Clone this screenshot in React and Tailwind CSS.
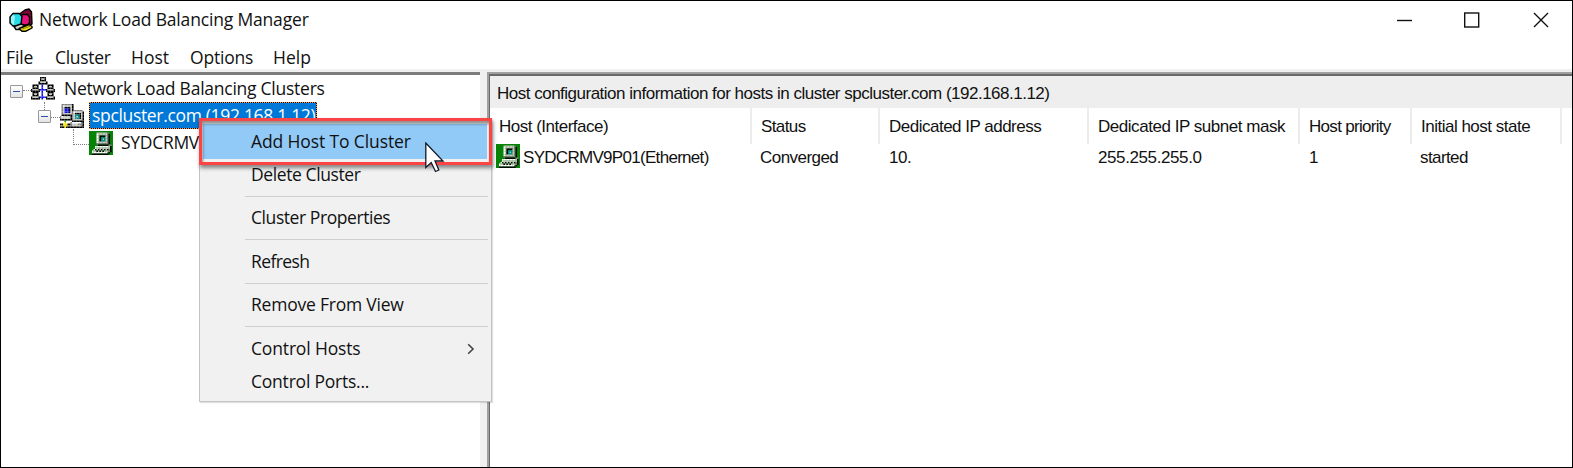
import React from 'react';

const COLORS = {
  K: '#000000', W: '#ffffff', G: '#c6c6c0', D: '#808080', T: '#008a8a',
  C: '#7fe0d8', B: '#1414e6', L: '#6a7cff', Y: '#f0e000', N: '#078407',
};

const HOST = [
  '................',
  '.....GGGGGGGD...',
  '.....WGGGGGGDK..',
  '.....WGKKKKGDK..',
  '.....WGKTTTGDK..',
  '.....WGKTCTGDK..',
  '.....WGKTTTGDK..',
  '.....WGGGGGGDK..',
  '.....DDDDDDDDK..',
  '......KKKKKKKDD.',
  '....WWWWWWWWWGK.',
  '....WGGGGGGGGGK.',
  '...WKGKGKGKGKDK.',
  '..WGGKGKGKGGGDK.',
  '..WWWWWWWWWWDK..',
  '..KKKKKKKKKKK...',
];

const ROOT = [
  '......KKKK......',
  '......KGGK......',
  '......KKKK......',
  '.....KGGGGK.....',
  '.....KKKKKK.....',
  '.KKKK..B...KKKK.',
  '.KGGK..B...KGGK.',
  '.KKKK..B...KKKK.',
  'KGGGGKBBBBKGGGGK',
  'KKKKKK.B..KKKKKK',
  '.KKKK..B...KKKK.',
  '.KGGK..B...KGGK.',
  '.KKKK..B...KKKK.',
  'KGGGGKBBBBKGGGGK',
  'KKKKKK.B..KKKKKK',
  '................',
];

const CLUSTER = [
  '.DDDDDDDK.......',
  '.DWGGGGGK.......',
  '.DGKKKKGK.......',
  '.DGBBBKGK.......',
  '.DGBBBKGKDDDDDD.',
  '.DGBBBKGDWGGGGGK',
  '.DGGGGGGDGKKKKGK',
  '.KKKKKKKDGTTTKGK',
  'DWGGGGGKDGTCTKGK',
  'DGGGGGGKDGTTTKGK',
  'KKKKKKKKDGGGGGGK',
  '...N....KKKKKKKK',
  '...Y...DWWWWWWDK',
  'KKYYYKKDGGGGDDDK',
  'DDYYYDDDGGGGGGDK',
  'KKKYKKKKKKKKKKKK',
];

function PixelIcon({ rows, bg }) {
  return (
    <svg viewBox="0 0 16 16" className="h-6 w-6 shrink-0">
      {bg && <rect width="16" height="16" fill={bg} />}
      {rows.map((row, y) =>
        [...row].map((c, x) =>
          c === '.' ? null : <rect key={x + '-' + y} x={x} y={y} width="1.04" height="1.04" fill={COLORS[c]} />
        )
      )}
    </svg>
  );
}

function AppIcon() {
  return (
    <svg viewBox="0 0 24 24" className="h-6 w-6 shrink-0" stroke="#000" strokeWidth="1.4" strokeLinejoin="round">
      <path d="M10.5 6 16 2 20 1 22.5 4 23 16 20 18 12 15z" fill="#7a0636" />
      <path d="M12 8 13.5 6.5H18.5L20.5 9V15L18 17H14L11.5 15z" fill="#e8107a" />
      <path d="M1 9 4 5.5H10.5L13 8.5 12 16 9 18H4L1 15z" fill="#25dbe6" />
      <path d="M2 9 4 6.5 6 8.5 5 16.5 4 17 2 14.5z" fill="#9af4f6" stroke="none" />
      <path d="M5 18.5 12 16 18 18.5 13 21.5 7 21.5z" fill="#d8d8d0" />
      <path d="M10 20.5 20 16.5 23 18.5V20L17 23.2H13z" fill="#f2e416" />
      <path d="M13 21 21 18.4" stroke="#8a8210" strokeWidth="1" fill="none" />
    </svg>
  );
}

function Toggle() {
  return (
    <div className="flex h-[13px] w-[13px] shrink-0 items-center justify-center rounded-[1px] border border-[#989898] bg-linear-to-b from-white to-[#e4e4e4]">
      <div className="h-[1px] w-[7px] bg-[#3050b0]" />
    </div>
  );
}

function MenuItem({ children, track, arrow }) {
  return (
    <div className="flex h-[33px] items-center justify-between pr-[16px] pl-[51px]">
      <span className={track}>{children}</span>
      {arrow && (
        <svg viewBox="0 0 8 12" className="h-3 w-2" fill="none" stroke="#444" strokeWidth="1.6">
          <path d="M1.2 1.2 6 6 1.2 10.8" />
        </svg>
      )}
    </div>
  );
}

function Separator({ height }) {
  return (
    <div className={'flex items-center pr-[3px] pl-[45px] ' + height}>
      <div className="h-[1px] w-full bg-[#cfcfcf]" />
    </div>
  );
}

function ContextMenu() {
  return (
    <div className="absolute top-[118px] left-[198px] h-[283px] w-[293px] border border-[#c4c4c4] bg-[#f1f1f1] pt-1 shadow-[1px_1px_1px_rgba(0,0,0,0.12)]">
      <div className="mr-1 ml-[3px] h-[35px] bg-[#91c9f7] pl-[48px] leading-[34px] tracking-[-0.12px]">Add Host To Cluster</div>
      <div className="-mt-[1px]">
        <MenuItem track="tracking-[-0.4px]">Delete Cluster</MenuItem>
        <Separator height="h-[10px]" />
        <MenuItem track="tracking-[-0.43px]">Cluster Properties</MenuItem>
        <Separator height="h-[11px]" />
        <MenuItem track="tracking-[-0.6px]">Refresh</MenuItem>
        <Separator height="h-[10px]" />
        <MenuItem track="tracking-[-0.22px]">Remove From View</MenuItem>
        <Separator height="h-[11px]" />
        <MenuItem track="tracking-[-0.16px]" arrow>Control Hosts</MenuItem>
        <MenuItem track="tracking-[-0.22px]">Control Ports...</MenuItem>
      </div>
    </div>
  );
}

function Tree() {
  return (
    <div className="w-[479px] shrink-0 overflow-hidden border-t-[3px] border-[#7c7c7c] bg-white whitespace-nowrap">
      <div className="flex h-[27px] items-center pl-[9px]">
        <div className="pt-[5px]"><Toggle /></div>
        <div className="mt-[4px] w-[8px] border-t border-dotted border-[#808080]" />
        <div className="pt-[1px]"><PixelIcon rows={ROOT} /></div>
        <span className="pl-[9px] tracking-[-0.25px]">Network Load Balancing Clusters</span>
      </div>
      <div className="flex h-[27px] items-center pl-[36px]">
        <div className="flex h-full w-[14px] flex-col items-center">
          <div className="h-[8px] border-l border-dotted border-[#808080]" />
          <Toggle />
        </div>
        <div className="mt-[4px] w-[9px] border-t border-dotted border-[#808080]" />
        <div className="pt-[1px]"><PixelIcon rows={CLUSTER} /></div>
        <div className="ml-[5px] h-full w-[228px] border border-dotted border-[#ff9a3c] bg-black">
          <div className="h-full bg-[#0078d7] pl-[2px] leading-[25px] tracking-[-0.33px] text-white">spcluster.com (192.168.1.12)</div>
        </div>
      </div>
      <div className="flex h-[27px] items-center pl-[72px]">
        <div className="flex h-full w-4 shrink-0 items-start">
          <div className="h-[16px] w-full border-b border-l border-dotted border-[#808080]" />
        </div>
        <PixelIcon rows={HOST} bg={COLORS.N} />
        <span className="pl-[8px] tracking-[-0.3px]">SYDCRMV</span>
      </div>
    </div>
  );
}

function HeadCell({ children, className }) {
  return <div className={'h-9 shrink-0 border-r-2 border-[#ececec] pl-[9px] leading-[37px] ' + className}>{children}</div>;
}

function Details() {
  return (
    <div className="flex min-w-0 flex-1 flex-col overflow-hidden border-t-2 border-l-2 border-[#a0a0a0] font-['Liberation_Sans',sans-serif] text-[17px] whitespace-nowrap">
      <div className="flex-1 border-t-2 border-l border-[#696969] bg-white">
        <div className="h-8 bg-[#eeeeee] pl-[7px] leading-[35px] tracking-[-0.5px]">
          Host configuration information for hosts in cluster spcluster.com (192.168.1.12)
        </div>
        <div className="flex">
          <HeadCell className="w-[262px] tracking-[-0.5px]">Host (Interface)</HeadCell>
          <HeadCell className="w-[128px] tracking-[-0.6px]">Status</HeadCell>
          <HeadCell className="w-[209px] tracking-[-0.5px]">Dedicated IP address</HeadCell>
          <HeadCell className="w-[211px] tracking-[-0.46px]">Dedicated IP subnet mask</HeadCell>
          <HeadCell className="w-[112px] tracking-[-0.7px]">Host priority</HeadCell>
          <HeadCell className="w-[150px] tracking-[-0.5px]">Initial host state</HeadCell>
        </div>
        <div className="flex h-6 leading-[27px]">
          <div className="flex w-[262px] shrink-0 pl-[6px]">
            <PixelIcon rows={HOST} bg={COLORS.N} />
            <span className="pl-[3px] tracking-[-0.7px]">SYDCRMV9P01(Ethernet)</span>
          </div>
          <div className="w-[128px] shrink-0 pl-[8px] tracking-[-0.55px]">Converged</div>
          <div className="w-[209px] shrink-0 pl-[9px] tracking-[-0.5px]">10.</div>
          <div className="w-[211px] shrink-0 pl-[9px] tracking-[-0.4px]">255.255.255.0</div>
          <div className="w-[112px] shrink-0 pl-[9px]">1</div>
          <div className="pl-[8px] tracking-[-0.6px]">started</div>
        </div>
      </div>
    </div>
  );
}

export default function App() {
  return (
    <div className="relative flex h-[468px] w-[1573px] flex-col overflow-hidden border border-black bg-white font-['Open_Sans',sans-serif] text-[17.5px] text-[#111]">
      <div className="flex h-[37px] items-center pr-[23px] pl-2">
        <AppIcon />
        <span className="flex-1 pl-[6px] tracking-[-0.17px]">Network Load Balancing Manager</span>
        <svg viewBox="0 0 153 16" className="h-4 w-[153px]" fill="none" stroke="#111" strokeWidth="1.4">
          <path d="M1 8.5H16" />
          <rect x="68.7" y="1" width="14" height="14" />
          <path d="M138 1 152 15M152 1 138 15" />
        </svg>
      </div>
      <div className="flex h-[31px] items-end pl-[5px] leading-[24px]">
        <span className="w-[49px] tracking-[-0.1px]">File</span>
        <span className="w-[76px] tracking-[-0.3px]">Cluster</span>
        <span className="w-[59px]">Host</span>
        <span className="w-[83px] tracking-[-0.2px]">Options</span>
        <span>Help</span>
      </div>
      <div className="flex min-h-0 flex-1 bg-[#f0f0f0] pt-[3px]">
        <Tree />
        <div className="w-[7px] shrink-0 bg-[#f0f0f0]" />
        <Details />
      </div>

      <ContextMenu />
      <div className="absolute top-[117px] left-[198px] h-[47px] w-[293px] border-[3px] border-[#fc4444] shadow-[1px_3px_4px_rgba(0,0,0,0.45),inset_1px_3px_3px_rgba(0,0,0,0.4)]" />
      <svg viewBox="0 0 20 31" className="absolute top-[141px] left-[424px] h-[31px] w-5">
        <path d="M.8 1V25.5L6.2 20.5 10.5 29.5 13.8 28 10 19H18z" fill="#fff" stroke="#111827" strokeWidth="1.3" />
      </svg>
    </div>
  );
}
